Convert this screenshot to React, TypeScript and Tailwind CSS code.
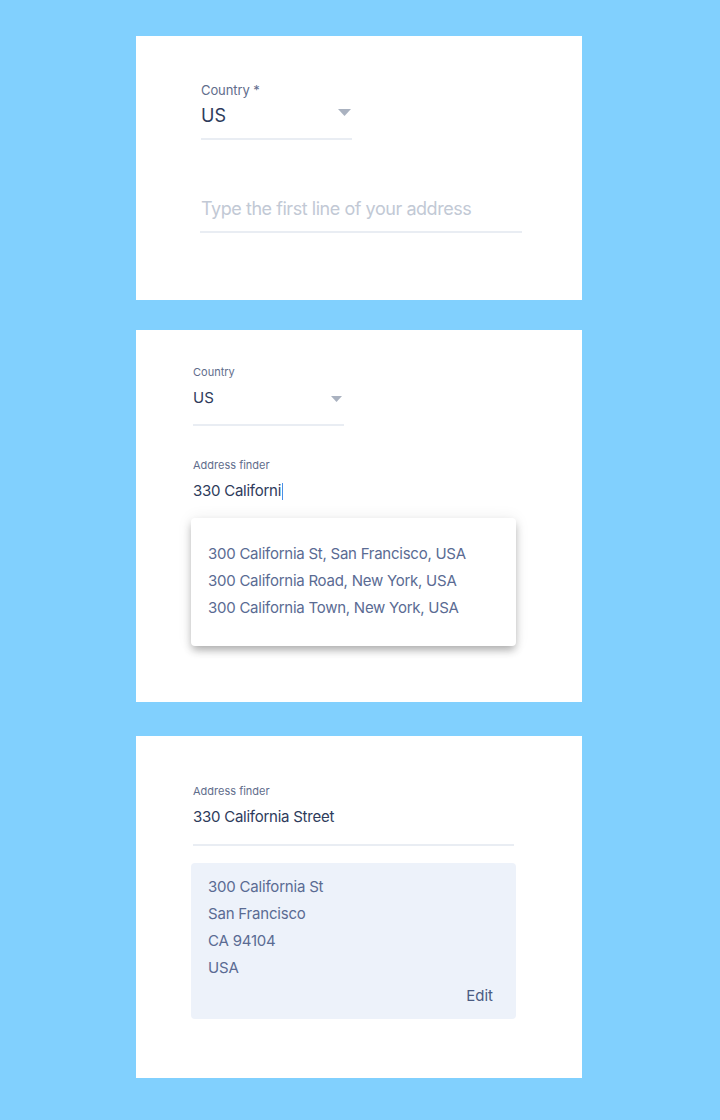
import React from "react";

const font = { fontFamily: "Inter, 'Noto Sans', Arial, sans-serif" };

function Arrow({ w, h }: { w: number; h: number }) {
  return (
    <svg width={w} height={h} viewBox={`0 0 ${w} ${h}`} className="shrink-0">
      <polygon points={`0,0 ${w},0 ${w / 2},${h}`} fill="#aab2c0" />
    </svg>
  );
}

export default function App() {
  return (
    <div
      className="min-h-[1120px] w-[720px] bg-[#81d0fe] flex flex-col items-start pl-[136px] pt-[36px]"
      style={font}
    >
      {/* Card 1 */}
      <div className="w-[446px] h-[264px] bg-white pl-[65px] pt-[46px] flex flex-col">
        <div className="text-[13px] leading-[16px] tracking-[-0.1px] text-[#5f6d8c]">Country *</div>
        <div className="mt-[7px] w-[151px] flex items-start justify-between pb-[11px] border-b-2 border-[#e9edf3]">
          <span className="text-[18px] leading-[22px] text-[#2e3b5b]">US</span>
          <span className="mt-[4px] mr-[1px]">
            <Arrow w={13} h={7} />
          </span>
        </div>
        <div className="mt-[58px] w-[322px] ml-[-1px] pl-[1px] pb-[11px] border-b-2 border-[#e9edf3] text-[18px] leading-[22px] tracking-[-0.45px] text-[#c2c9d5]">
          Type the first line of your address
        </div>
      </div>

      {/* Card 2 */}
      <div className="mt-[30px] w-[446px] h-[372px] bg-white pl-[57px] pt-[35px] flex flex-col">
        <div className="text-[11px] leading-[14px] text-[#5f6d8c]">Country</div>
        <div className="mt-[10px] w-[151px] flex items-start justify-between pb-[17px] border-b-2 border-[#e9edf3]">
          <span className="text-[15px] leading-[18px] text-[#2e3b5b]">US</span>
          <span className="mt-[7px] mr-[2px]">
            <Arrow w={11} h={6} />
          </span>
        </div>
        <div className="mt-[32px] text-[11px] leading-[14px] text-[#5f6d8c]">Address finder</div>
        <div className="mt-[10px] flex items-center text-[15px] leading-[18px] tracking-[-0.25px] text-[#2e3b5b]">
          <span>330 Californi</span>
          <span className="ml-[1px] w-[1px] h-[17px] bg-[#4a8fe7]" />
        </div>
        <div className="mt-[18px] ml-[-2px] w-[325px] h-[128px] bg-white rounded-[4px] pt-[22px] pl-[17px] shadow-[0_5px_9px_-1px_rgba(0,0,0,0.3),0_0_16px_rgba(0,0,0,0.07)]">
          {[
            "300 California St, San Francisco, USA",
            "300 California Road, New York, USA",
            "300 California Town, New York, USA",
          ].map((t) => (
            <div key={t} className="text-[15px] leading-[27px] tracking-[-0.25px] text-[#5a6b93]">
              {t}
            </div>
          ))}
        </div>
      </div>

      {/* Card 3 */}
      <div className="mt-[34px] w-[446px] h-[342px] bg-white pl-[57px] pt-[48px] flex flex-col">
        <div className="text-[11px] leading-[14px] text-[#5f6d8c]">Address finder</div>
        <div className="mt-[10px] w-[321px] pb-[18px] border-b-2 border-[#e9edf3] text-[15px] leading-[18px] tracking-[-0.25px] text-[#2e3b5b]">
          330 California Street
        </div>
        <div className="mt-[17px] ml-[-2px] w-[325px] bg-[#edf2fa] rounded-[4px] pt-[10px] pb-[10px] pl-[17px] pr-[23px] flex flex-col">
          {["300 California St", "San Francisco", "CA 94104", "USA"].map((t) => (
            <div key={t} className="text-[15px] leading-[27px] tracking-[-0.2px] text-[#5a6b93]">
              {t}
            </div>
          ))}
          <div className="mt-[1px] self-end text-[15px] leading-[27px] text-[#4b5b82]">Edit</div>
        </div>
      </div>
    </div>
  );
}
